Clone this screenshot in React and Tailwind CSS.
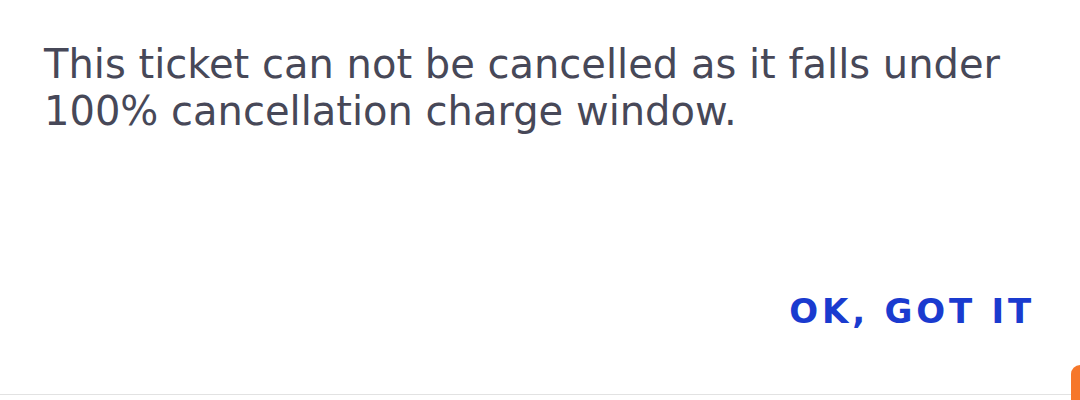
import React from "react";

const App = () => {
  return (
    <div className="relative w-[1080px] h-[400px] bg-white overflow-hidden flex flex-col" style={{ fontFamily: '"DejaVu Sans", "Noto Sans", sans-serif' }}>
      <div className="flex-1 flex flex-col px-[44px] pt-[41px]">
        <p className="text-[40px] leading-[47px] text-[#474858] tracking-[0px] w-[1000px]">
          This ticket can not be cancelled as it falls under 100% cancellation charge window.
        </p>
        <div className="flex-1" />
        <div className="flex justify-end pb-[66px] pr-[1px]">
          <button className="text-[34px] leading-none font-bold tracking-[3.8px] text-[#1a3bcf]">
            OK, GOT IT
          </button>
        </div>
      </div>
      <div className="h-[6px] border-t border-[#e2e2e2]" />
      <div className="absolute right-0 bottom-0 w-[9px] h-[35px] bg-[#f6772a] rounded-tl-[10px]" />
    </div>
  );
};

export default App;
